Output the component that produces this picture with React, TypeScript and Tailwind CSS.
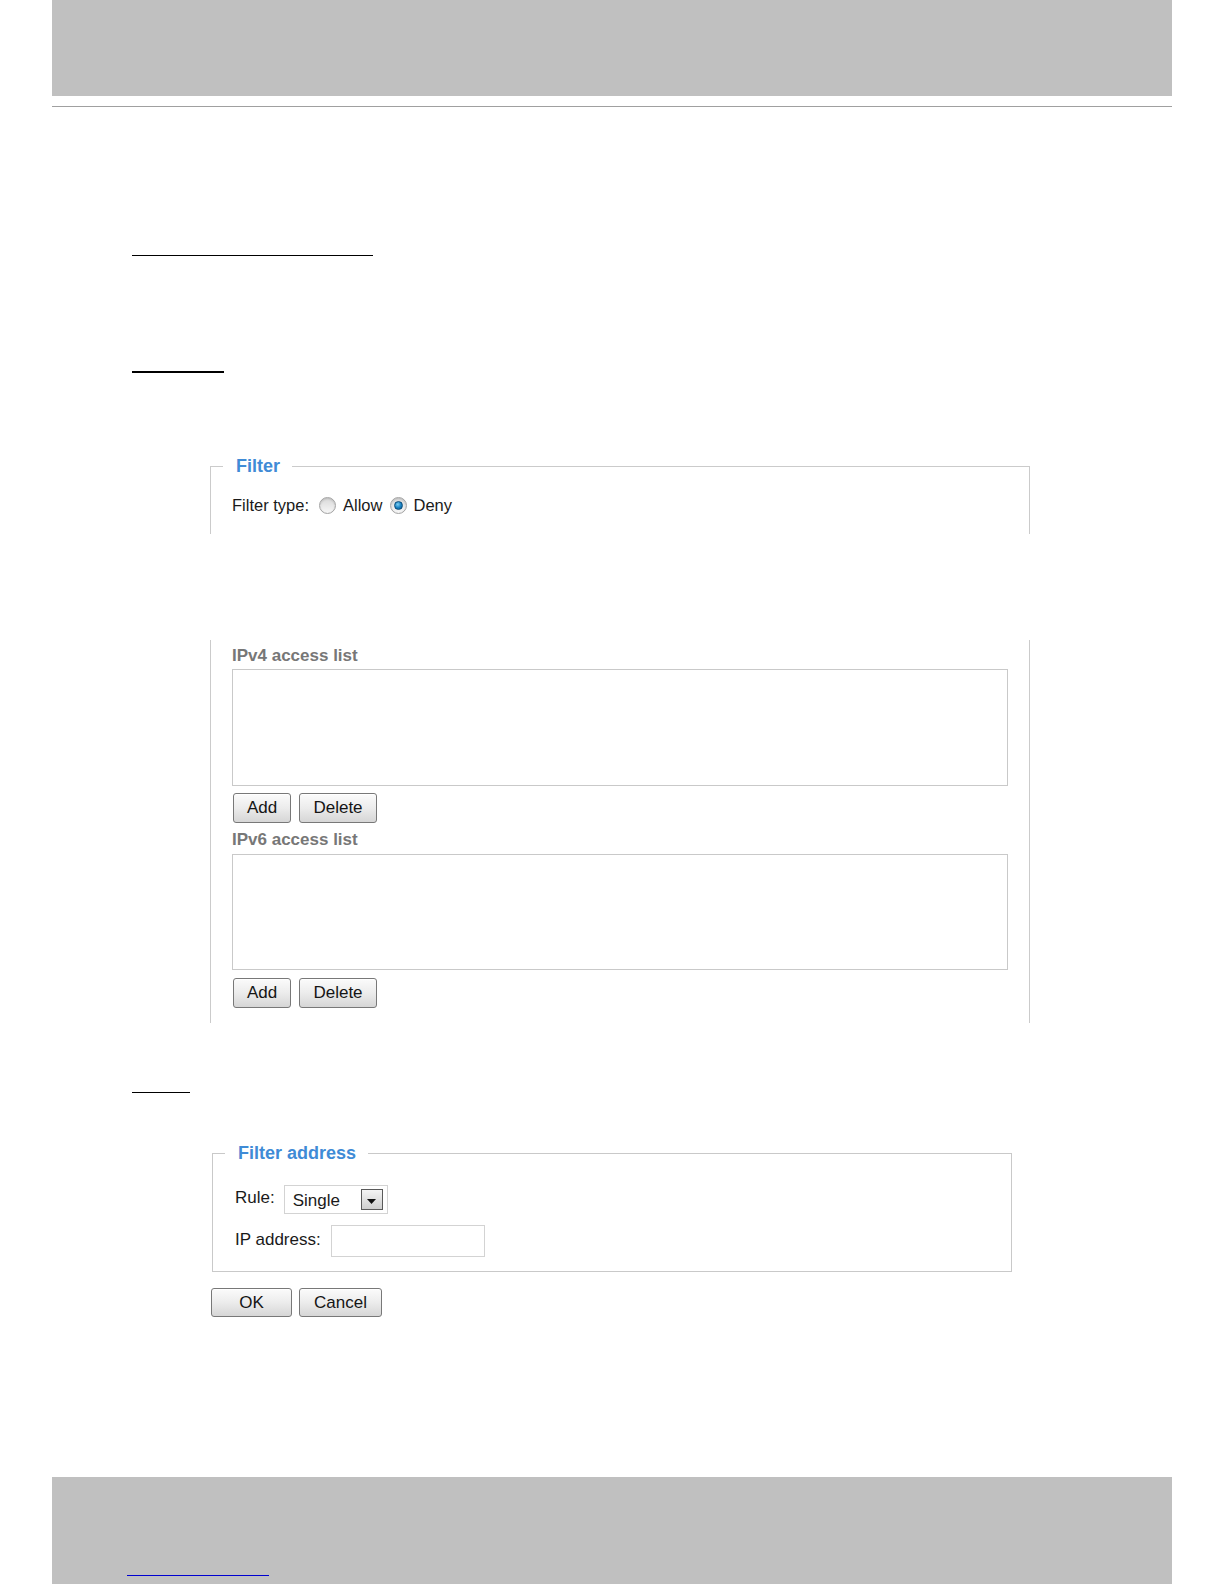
import React from "react";

const font = "font-['Liberation_Sans',Arial,sans-serif]";

function Radio({ checked = false }: { checked?: boolean }) {
  return (
    <span className="flex h-[17px] w-[17px] flex-none items-center justify-center rounded-full border border-[#a3a3a3] bg-linear-to-b from-[#d9d9d9] to-[#f7f7f7] shadow-[inset_0_1px_2px_rgba(0,0,0,0.15)]">
      {checked && (
        <span className="h-[9px] w-[9px] rounded-full border border-[#0a4d7c] bg-[radial-gradient(circle_at_40%_35%,#7fd0f3_0%,#1b84c4_50%,#0a5689_100%)]" />
      )}
    </span>
  );
}

function Button({ label, w, h = 30 }: { label: string; w: string; h?: number }) {
  return (
    <button
      type="button"
      className={`${w} ${h === 30 ? "h-[30px]" : "h-[29px]"} flex items-center justify-center rounded-[3px] border border-[#787878] bg-linear-to-b from-[#fbfbfb] via-[#ececec] to-[#d6d6d6] text-[17px] leading-[20px] text-[#151515] shadow-[inset_0_1px_0_#ffffff]`}
    >
      {label}
    </button>
  );
}

function AccessList({ label, first = false }: { label: string; first?: boolean }) {
  return (
    <div className={first ? "" : "mt-[7px]"}>
      <div className="text-[17px] font-bold leading-[20px] text-[#777777]">{label}</div>
      <div className={`w-[776px] border border-[#c9c9c9] bg-white ${first ? "mt-[3px] h-[117px]" : "mt-[4px] h-[116px]"}`} />
      <div className={`ml-px flex gap-[8px] ${first ? "mt-[7px]" : "mt-[8px]"}`}>
        <Button label="Add" w="w-[58px]" />
        <Button label="Delete" w="w-[78px]" />
      </div>
    </div>
  );
}

export default function App() {
  return (
    <div className={`flex h-[1584px] w-full flex-col bg-white text-[#1a1a1a] ${font}`}>
      {/* page header band */}
      <div className="mx-[52px] h-[96px] flex-none bg-[#c0c0c0]" />
      <div className="mx-[52px] mt-[10px] h-px flex-none bg-[#a0a0a0]" />

      {/* blank heading rules */}
      <div className="ml-[132px] mt-[148px] h-px w-[241px] flex-none bg-black" />
      <div className="ml-[132px] mt-[115px] h-[2px] w-[92px] flex-none bg-black" />

      {/* Filter */}
      <fieldset className="ml-[210px] mt-[82px] w-[820px] flex-none border border-b-0 border-[#cbcbcb] pb-[19px]">
        <legend className="ml-[12px] pl-[13px] pr-[12px] text-[18px] font-bold leading-[22px] text-[#3f8bd6]">
          Filter
        </legend>
        <div className="ml-[21px] mt-[18px] flex h-[20px] items-center text-[16.5px] leading-[20px]">
          <span>Filter type:</span>
          <span className="ml-[10px]">
            <Radio />
          </span>
          <span className="ml-[7px]">Allow</span>
          <span className="ml-[8px]">
            <Radio checked />
          </span>
          <span className="ml-[6px]">Deny</span>
        </div>
      </fieldset>

      {/* access lists */}
      <div className="ml-[210px] mt-[106px] w-[820px] flex-none border-x border-[#cbcbcb] pb-[15px] pl-[21px] pt-[6px]">
        <AccessList label="IPv4 access list" first />
        <AccessList label="IPv6 access list" />
      </div>

      <div className="ml-[132px] mt-[69px] h-px w-[58px] flex-none bg-black" />

      {/* Filter address */}
      <fieldset className="ml-[212px] mt-[49px] w-[800px] flex-none border border-[#c9c9c9] pb-[14px] pl-[22px]">
        <legend className="-ml-[10px] pl-[13px] pr-[12px] text-[18px] font-bold leading-[22px] text-[#3f8bd6]">
          Filter address
        </legend>
        <div className="mt-[21px] flex h-[29px] items-center gap-[9px] text-[17px] leading-[20px]">
          <span className="-mt-[3px]">Rule:</span>
          <div className="flex h-[29px] w-[104px] items-start justify-between border border-[#d3d3d3] bg-white pl-[8px] pr-[4px]">
            <span className="mt-[5px] h-[18px] overflow-hidden">Single</span>
            <span className="mt-[3px] flex h-[21px] w-[22px] items-center justify-center border border-[#5a5a5a] bg-linear-to-b from-[#f4f4f4] to-[#cfcfcf]">
              <svg width="9" height="5" viewBox="0 0 9 5" className="mt-[3px]">
                <path d="M0 0h9L4.5 5z" fill="#111" />
              </svg>
            </span>
          </div>
        </div>
        <div className="mt-[11px] flex h-[32px] items-center gap-[10px] text-[17px] leading-[20px]">
          <span className="-mt-[3px]">IP address:</span>
          <div className="h-[32px] w-[154px] border border-[#d3d3d3] bg-white" />
        </div>
      </fieldset>

      <div className="ml-[211px] mt-[16px] flex flex-none gap-[7px]">
        <Button label="OK" w="w-[81px]" h={29} />
        <Button label="Cancel" w="w-[83px]" h={29} />
      </div>

      {/* page footer band */}
      <div className="mx-[52px] mt-auto flex h-[107px] flex-none flex-col justify-end bg-[#c0c0c0] pb-[8px] pl-[75px]">
        <div className="h-px w-[142px] bg-[#0000d0]" />
      </div>
    </div>
  );
}
